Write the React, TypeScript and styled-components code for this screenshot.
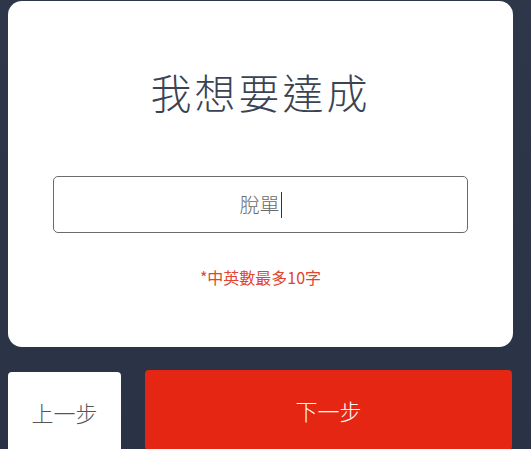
import styled, { createGlobalStyle } from "styled-components";

const GlobalStyle = createGlobalStyle`
  html, body {
    margin: 0;
    padding: 0;
    background: #2c3547;
    font-family: "Noto Sans CJK TC", "Noto Sans", sans-serif;
    overflow: hidden;
  }
`;

const Page = styled.div`
  width: 531px;
  height: 449px;
  box-sizing: border-box;
  padding: 1px 18px 0 8px;
  background: linear-gradient(180deg, #2e374a 0%, #2a3345 100%);
  display: flex;
  flex-direction: column;
  gap: 23px;
  overflow: hidden;
`;

const Card = styled.div`
  background: #ffffff;
  border-radius: 14px;
  height: 346px;
  flex-shrink: 0;
  box-sizing: border-box;
  padding-top: 65px;
  display: flex;
  flex-direction: column;
  align-items: center;
`;

const Title = styled.h1`
  margin: 0;
  font-size: 41px;
  line-height: 50px;
  font-weight: 300;
  color: #3a4354;
  letter-spacing: 3px;
`;

const Field = styled.div`
  margin-top: 60px;
  width: 415px;
  height: 57px;
  box-sizing: border-box;
  border: 1px solid #6b6b6b;
  border-radius: 5px;
  display: flex;
  align-items: center;
  justify-content: center;
  font-size: 20px;
  color: #6a6a6a;
  font-weight: 300;
`;

const Caret = styled.span`
  display: inline-block;
  width: 1px;
  height: 26px;
  background: #333;
  margin-left: 1px;
`;

const Hint = styled.p`
  margin: 34px 0 0;
  font-size: 16px;
  line-height: 20px;
  color: #e2442f;
`;

const Actions = styled.div`
  display: flex;
  gap: 24px;
  align-items: flex-start;
`;

const StepButton = styled.button<{ $primary?: boolean }>`
  border: none;
  border-radius: 4px;
  height: 80px;
  margin-top: ${(p) => (p.$primary ? "0" : "2px")};
  width: ${(p) => (p.$primary ? "367px" : "113px")};
  background: ${(p) => (p.$primary ? "#e52612" : "#ffffff")};
  color: ${(p) => (p.$primary ? "#ffffff" : "#555555")};
  font-family: inherit;
  font-size: 22px;
  font-weight: 300;
  padding: 0 0 1px;
  cursor: pointer;
`;

export default function App() {
  return (
    <>
      <GlobalStyle />
      <Page>
        <Card>
          <Title>我想要達成</Title>
          <Field role="textbox">
            脫單
            <Caret />
          </Field>
          <Hint>*中英數最多10字</Hint>
        </Card>
        <Actions>
          <StepButton>上一步</StepButton>
          <StepButton $primary>下一步</StepButton>
        </Actions>
      </Page>
    </>
  );
}
